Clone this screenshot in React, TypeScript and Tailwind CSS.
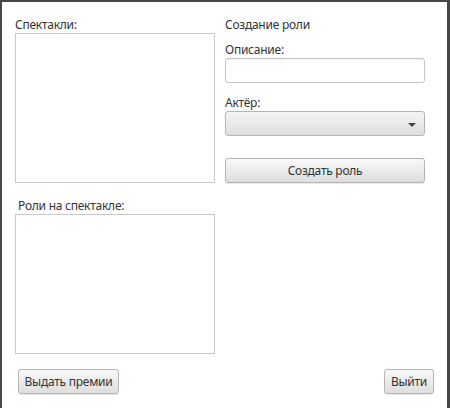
import React from "react";

const font = { fontFamily: '"Noto Sans", "Open Sans", sans-serif' };

function Btn({ children, className = "" }: { children: React.ReactNode; className?: string }) {
  return (
    <button
      className={
        "flex items-center justify-center rounded-[3px] border border-[#b4b4b4] bg-gradient-to-b from-[#f9f9f9] to-[#dedede] text-[12px] text-[#333] shadow-[0_1px_0_rgba(0,0,0,0.08)] " +
        className
      }
    >
      {children}
    </button>
  );
}

export default function App() {
  return (
    <div
      style={font}
      className="box-border flex h-[408px] w-[450px] flex-col border-l-2 border-r-[3px] border-t-2 border-[#474747] bg-white text-[12px] leading-[16px] tracking-[-0.25px] text-[#333]"
    >
      <div className="flex gap-[10px] pl-[13px] pt-[15px]">
        <div className="flex w-[200px] flex-col">
          <div className="h-[16px]">Спектакли:</div>
          <div className="h-[150px] border border-[#c8c8c8] bg-white" />
          <div className="mt-[15px] h-[16px] pl-[3px]">Роли на спектакле:</div>
          <div className="h-[140px] border border-[#c8c8c8] bg-white" />
        </div>
        <div className="flex w-[200px] flex-col">
          <div className="h-[16px]">Создание роли</div>
          <div className="mt-[9px] h-[16px]">Описание:</div>
          <div className="h-[25px] rounded-[3px] border border-[#c4c4c4] bg-white shadow-[inset_0_1px_1px_rgba(0,0,0,0.06)]" />
          <div className="mt-[12px] h-[16px]">Актёр:</div>
          <div className="relative h-[25px] rounded-[3px] border border-[#b4b4b4] bg-gradient-to-b from-[#f5f5f5] to-[#dedede]">
            <svg className="absolute right-[8px] top-[11px]" width="8" height="4" viewBox="0 0 8 4">
              <path d="M0 0 L8 0 L4 4 Z" fill="#444" />
            </svg>
          </div>
          <Btn className="mt-[22px] h-[25px] w-full">Создать роль</Btn>
        </div>
      </div>
      <div className="mt-auto flex justify-between pb-[14px] pl-[16px] pr-[13px]">
        <Btn className="h-[25px] w-[101px]">Выдать премии</Btn>
        <Btn className="h-[25px] w-[50px]">Выйти</Btn>
      </div>
    </div>
  );
}
